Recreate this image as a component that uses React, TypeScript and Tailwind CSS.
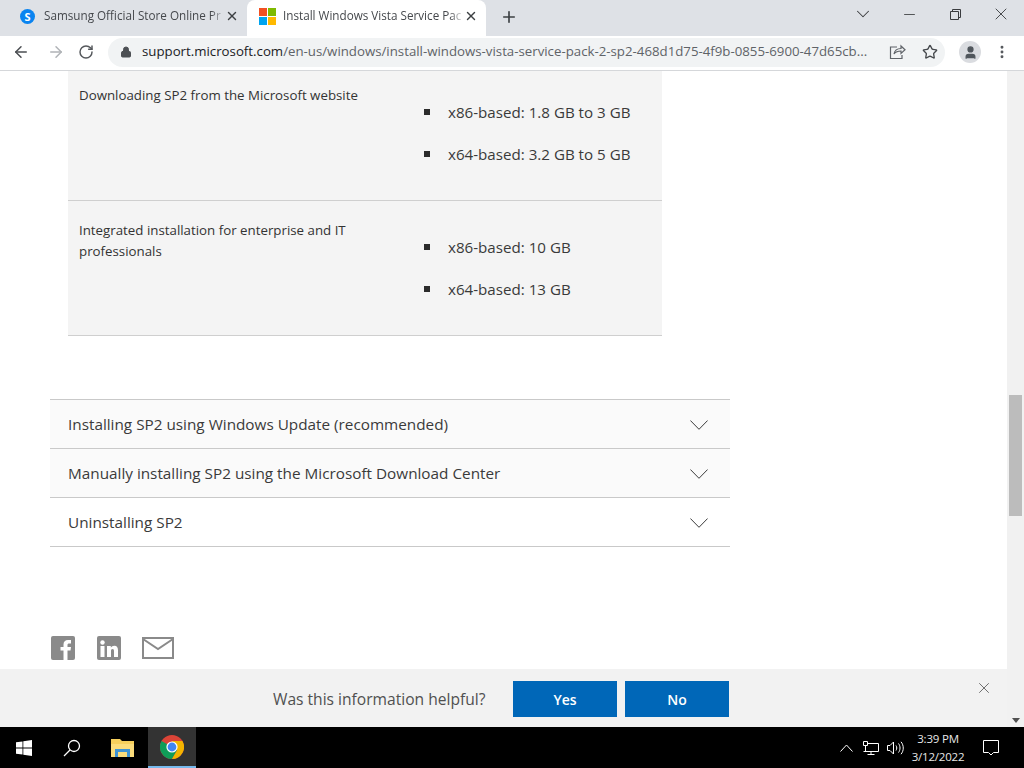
import { ArrowLeft, ArrowRight, ChevronDown, Lock, Minus, MoreVertical, Plus, RotateCw, Star, User, X } from 'lucide-react';

const font = "font-['Open_Sans','Noto_Sans',sans-serif]";

function ChromeLogo() {
  return (
    <svg width="24" height="24" viewBox="0 0 24 24">
      <circle cx="12" cy="12" r="12" fill="#db4437" />
      <path d="M12 12 1.6 6A12 12 0 0 0 12 24l5.2-9z" fill="#0f9d58" />
      <path d="M12 6h10.4A12 12 0 0 1 12 24l5.2-9z" fill="#f4b400" />
      <circle cx="12" cy="12" r="5.6" fill="#fff" />
      <circle cx="12" cy="12" r="4.4" fill="#4285f4" />
    </svg>
  );
}

function MicrosoftLogo() {
  return (
    <div className="grid h-[17px] w-[17px] grid-cols-2 gap-px">
      <div className="bg-[#f25022]" />
      <div className="bg-[#7fba00]" />
      <div className="bg-[#00a4ef]" />
      <div className="bg-[#ffb900]" />
    </div>
  );
}

function Tab({ title, active, icon }: { title: string; active?: boolean; icon: React.ReactNode }) {
  return (
    <div className={`flex h-9 w-[239px] items-center rounded-t-lg pb-1 pl-3 pr-2 ${active ? 'bg-white' : ''}`}>
      <div className="flex w-6 shrink-0 items-center">{icon}</div>
      <span className="min-w-0 flex-1 whitespace-nowrap text-[11.7px] text-[#45484c] [mask-image:linear-gradient(to_left,transparent,black_14px)]">
        {title}
      </span>
      <X size={14} strokeWidth={2.4} className="shrink-0 text-[#3c4043]" />
    </div>
  );
}

function BrowserChrome() {
  return (
    <>
      <div className="flex h-9 items-start bg-[#dee1e6] pl-2">
        <Tab
          title="Samsung Official Store Online Pr"
          icon={
            <div className="flex h-[15px] w-[15px] items-center justify-center rounded-full bg-[#0a84f0] text-[11px] font-bold leading-none text-white">
              S
            </div>
          }
        />
        <Tab title="Install Windows Vista Service Pac" active icon={<MicrosoftLogo />} />
        <Plus size={18} strokeWidth={2.2} className="ml-[14px] mt-2 text-[#3c4043]" />
        <div className="flex-1" />
        <div className="flex h-7 items-center text-[#3a3c3f]">
          <ChevronDown size={22} strokeWidth={1.1} className="mr-[27px]" />
          <Minus size={17} strokeWidth={1.2} className="mr-[32px]" />
          <svg width="11" height="11" viewBox="0 0 11 11" fill="none" stroke="currentColor" className="mr-[30px]">
            <path d="M.5 2.500h8v8h-8zM2.500 2.500v-2h8v8h-2" />
          </svg>
          <X size={20} strokeWidth={1.1} className="mr-[13px]" />
        </div>
      </div>
      <div className="flex h-[35px] items-center border-b border-[#d5d7da] bg-white pb-[2px] text-[#5f6368]">
        <ArrowLeft size={18} strokeWidth={2} className="ml-3 text-[#4a4d51]" />
        <ArrowRight size={18} strokeWidth={2} className="ml-[17px] text-[#b0b3b7]" />
        <RotateCw size={16} strokeWidth={2.2} className="ml-[13px] text-[#55585c]" />
        <div className="ml-[14px] flex h-[29px] w-[837px] items-center rounded-full bg-[#f1f3f4] pl-3 pr-[7px]">
          <Lock size={12} fill="currentColor" strokeWidth={2} className="shrink-0 text-[#4d5054]" />
          <div className="ml-[10px] min-w-0 flex-1 whitespace-nowrap text-[13.25px]">
            <span className="text-[#202124]">support.microsoft.com</span>
            <span>/en-us/windows/install-windows-vista-service-pack-2-sp2-468d1d75-4f9b-0855-6900-47d65cb...</span>
          </div>
          <svg width="17" height="16" viewBox="0 0 17 16" fill="none" stroke="currentColor" strokeWidth="1.2" className="shrink-0">
            <path d="M8 3H1.500v11.500H13V11M5 10c.5-3 3-5.500 7-5.500V2l4 3.800-4 3.600V7c-3 0-5.500 1-7 3z" />
          </svg>
          <Star size={16} strokeWidth={2} className="ml-4 shrink-0 text-[#45484c]" />
        </div>
        <div className="ml-[14px] flex h-[22px] w-[22px] items-center justify-center rounded-full bg-[#dadce0]">
          <User size={15} fill="currentColor" className="text-[#50565c]" />
        </div>
        <MoreVertical size={16} strokeWidth={2.4} className="ml-[13px] text-[#55585c]" />
      </div>
    </>
  );
}

function BulletRow({ children }: { children: string }) {
  return (
    <li className="flex h-[42px] items-center text-[15.15px] text-[#3a3a3a]">
      <span className="mr-[18px] h-[6px] w-[6px] bg-[#2b2b2b]" />
      {children}
    </li>
  );
}

function TableRow({ label, items, className }: { label: string; items: string[]; className: string }) {
  return (
    <div className={`flex border-b border-[#cfcfcf] bg-[#f4f4f4] ${className}`}>
      <p className="w-[345px] pl-[11px] pr-[50px] text-[13.3px] leading-[21px] text-[#333]">{label}</p>
      <ul className="ml-[11px] mt-[6px]">
        {items.map((item) => (
          <BulletRow key={item}>{item}</BulletRow>
        ))}
      </ul>
    </div>
  );
}

function AccordionRow({ label, shaded }: { label: string; shaded?: boolean }) {
  return (
    <div className={`flex h-[49px] items-center justify-between border-b border-[#c9c9c9] pl-[18px] pr-[22px] ${shaded ? 'bg-[#fafafa]' : ''}`}>
      <span className="text-[15.3px] text-[#3a3a3a]">{label}</span>
      <svg width="18" height="10" viewBox="0 0 18 10" fill="none" stroke="#3a3a3a" strokeWidth="1" className="mt-[2px]">
        <path d="M.4.500 9 9.300 17.600.5" />
      </svg>
    </div>
  );
}

function SocialIcons() {
  return (
    <div className="mt-[89px] flex items-center pl-[51px]">
      <div className="flex h-6 w-6 items-end justify-end overflow-hidden rounded-[2px] bg-[#8a8a8a] pr-[3px]">
        <svg width="12" height="21" viewBox="0 0 12 21" fill="#fff">
          <path d="M3.500 21V11.500H.5V8h3V5.500C3.500 2.500 5.200 1 8 1h3v3.500H9c-1 0-1.500.5-1.500 1.500v2H11l-.5 3.500h-3V21z" />
        </svg>
      </div>
      <div className="ml-[22px] flex h-6 w-6 items-center justify-center rounded-[2px] bg-[#8a8a8a]">
        <svg width="18" height="17" viewBox="0 0 18 17" fill="#fff">
          <circle cx="2.500" cy="2.500" r="2.200" />
          <path d="M.5 6h4v11h-4zM7 6h3.800v1.600C11.500 6.500 12.700 5.700 14.300 5.700c2.700 0 3.700 1.800 3.700 4.600V17h-4v-6c0-1.300-.4-2.100-1.500-2.100S11 9.800 11 11v6H7z" />
        </svg>
      </div>
      <svg width="32" height="22" viewBox="0 0 32 22" fill="none" stroke="#8a8a8a" strokeWidth="2" className="ml-[21px]">
        <path d="M1 1h30v20H1zM1 2l15 10L31 2" />
      </svg>
    </div>
  );
}

function FeedbackBar() {
  return (
    <div className="relative flex h-[58px] shrink-0 items-center bg-[#f2f2f2] pl-[273px] pt-[2px]">
      <span className="mt-px w-[240px] text-[15.6px] text-[#505050]">Was this information helpful?</span>
      <button className="h-9 w-[104px] bg-[#0067b8] text-[14px] font-semibold text-white">Yes</button>
      <button className="ml-2 h-9 w-[104px] bg-[#0067b8] text-[14px] font-semibold text-white">No</button>
      <X size={18} strokeWidth={1} className="absolute right-[14px] top-[10px] text-[#444]" />
    </div>
  );
}

function Scrollbar() {
  return (
    <div className="flex w-[17px] shrink-0 flex-col items-center bg-[#f1f1f1]">
      <div className="h-[324px]" />
      <div className="h-[121px] w-[13px] bg-[#bcbcbc]" />
      <div className="flex-1" />
      <div className="mb-1 h-0 w-0 border-x-[4px] border-t-[5px] border-x-transparent border-t-[#505050]" />
    </div>
  );
}

function Taskbar() {
  return (
    <div className="flex h-[41px] shrink-0 items-center bg-black text-white">
      <svg width="16" height="16" viewBox="0 0 16 16" fill="#fff" className="ml-4">
        <path d="M0 2.300 6.500 1.400v6.200H0zM7.300 1.300 16 0v7.600H7.300zM0 8.400h6.500v6.200L0 13.700zM7.300 8.400H16V16l-8.700-1.200z" />
      </svg>
      <svg width="18" height="18" viewBox="0 0 18 18" fill="none" stroke="#fff" strokeWidth="1.300" className="ml-[31px]">
        <circle cx="11" cy="7" r="5.500" />
        <path d="M7 11 1 17" />
      </svg>
      <svg width="23" height="19" viewBox="0 0 23 19" className="ml-[30px]">
        <path d="M0 1h9l2 2h12v16H0z" fill="#f6cf5c" />
        <path d="M0 6h23v13H0z" fill="#fbdc7b" />
        <path d="M4 11h15v8h-3v-5H7v5H4z" fill="#3f93d3" />
      </svg>
      <div className="ml-[14px] flex h-[41px] w-[48px] items-center justify-center border-b-[2px] border-[#76b9ed] bg-[#333]">
        <ChromeLogo />
      </div>
      <div className="flex-1" />
      <svg width="13" height="8" viewBox="0 0 13 8" fill="none" stroke="#fff" strokeWidth="1" className="mr-[10px]">
        <path d="M.5 7.500 6.500 1l6 6.500" />
      </svg>
      <svg width="16" height="14" viewBox="0 0 16 14" fill="none" stroke="#fff" strokeWidth="1" className="mr-2">
        <path d="M4 2.500h11.500v8H.5M8 10.500v3M4.500 13.500h7M.5.500h4v4h-4zM2.500 4.500v6" />
      </svg>
      <svg width="17" height="14" viewBox="0 0 17 14" fill="none" stroke="#fff" strokeWidth="1">
        <path d="M.5 4.500h2.500l3.500-3.500v12L3 9.500H.5zM9 4.500c1 1.500 1 3.500 0 5M11.500 2.500c2 2.500 2 6.500 0 9M14 .8c3 3.500 3 9 0 12.400" />
      </svg>
      <div className="flex w-[68px] flex-col items-center text-[11.5px] leading-[18px] tracking-[-0.2px] text-[#e8e8e8]">
        <span>3:39 PM</span>
        <span>3/12/2022</span>
      </div>
      <svg width="16" height="16" viewBox="0 0 16 16" fill="none" stroke="#fff" strokeWidth="1" className="ml-[11px] mr-[25px]">
        <path d="M.5.500h15v12h-5l-2.500 2.500-2.500-2.500h-5z" />
      </svg>
    </div>
  );
}

export default function App() {
  return (
    <div className={`flex h-[768px] w-[1024px] flex-col overflow-hidden bg-white ${font}`}>
      <BrowserChrome />
      <div className="flex min-h-0 flex-1">
        <div className="flex min-w-0 flex-1 flex-col">
          <main className="min-h-0 flex-1 overflow-hidden">
            <div className="ml-[68px] w-[594px]">
              <TableRow
                label="Downloading SP2 from the Microsoft website"
                items={['x86-based: 1.8 GB to 3 GB', 'x64-based: 3.2 GB to 5 GB']}
                className="h-[130px] pt-[14px]"
              />
              <TableRow
                label="Integrated installation for enterprise and IT professionals"
                items={['x86-based: 10 GB', 'x64-based: 13 GB']}
                className="h-[135px] pt-[19px]"
              />
            </div>
            <div className="ml-[50px] mt-[63px] w-[680px] border-t border-[#c9c9c9]">
              <AccordionRow label="Installing SP2 using Windows Update (recommended)" shaded />
              <AccordionRow label="Manually installing SP2 using the Microsoft Download Center" shaded />
              <AccordionRow label="Uninstalling SP2" />
            </div>
            <SocialIcons />
          </main>
          <FeedbackBar />
        </div>
        <Scrollbar />
      </div>
      <Taskbar />
    </div>
  );
}
